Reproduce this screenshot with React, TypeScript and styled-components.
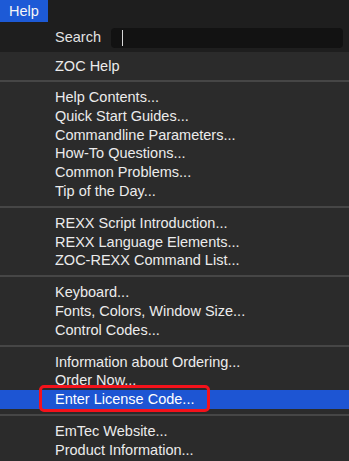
import React from 'react';
import styled, { createGlobalStyle } from 'styled-components';

const GlobalStyle = createGlobalStyle`
  html, body {
    margin: 0;
    padding: 0;
    background: #2b2b2b;
  }
  body {
    font-family: "Liberation Sans", Arial, sans-serif;
    -webkit-font-smoothing: antialiased;
  }
`;

const Page = styled.div`
  width: 349px;
  height: 461px;
  overflow: hidden;
  background: #2b2b2b;
  color: #ececec;
  font-size: 14.5px;
`;

const MenuBar = styled.div`
  display: flex;
  height: 22px;
  background: #1e1e1e;
`;

const MenuTitle = styled.div<{ active?: boolean }>`
  display: flex;
  align-items: center;
  padding: 0 9px;
  width: 48px;
  box-sizing: border-box;
  background: ${(p) => (p.active ? '#1d5ad6' : 'transparent')};
  color: #f6f6f6;
  font-size: 14.5px;
`;

const SearchRow = styled.div`
  display: flex;
  align-items: center;
  height: 30px;
  padding: 0 6px 0 55px;
  background: #1e1e1e;
`;

const SearchLabel = styled.span`
  width: 56px;
  color: #e2e2e2;
`;

const SearchField = styled.div`
  flex: 1;
  height: 20px;
  margin-top: 2px;
  border-radius: 4px;
  background: #121212;
  display: flex;
  align-items: center;
  padding-left: 11px;
`;

const Caret = styled.div`
  width: 1px;
  height: 16px;
  background: #d8d8d8;
`;

const TopItem = styled.div`
  height: 28px;
  display: flex;
  align-items: center;
  padding-left: 55px;
`;

const Separator = styled.div`
  height: 2px;
  background: #464646;
`;

const Group = styled.div`
  padding: 6px 0 5px;
`;

const Item = styled.div<{ selected?: boolean }>`
  position: relative;
  height: 18.8px;
  line-height: 18.8px;
  padding-left: 55px;
  white-space: nowrap;
  background: ${(p) => (p.selected ? '#1d55d3' : 'transparent')};
  color: ${(p) => (p.selected ? '#ffffff' : '#ececec')};
`;

const Marker = styled.div`
  position: absolute;
  left: 39px;
  top: -5px;
  width: 171px;
  height: 27px;
  box-sizing: border-box;
  border: 3px solid #f4121b;
  border-radius: 5px;
`;

const groups: { label: string; selected?: boolean }[][] = [
  [
    { label: 'Help Contents...' },
    { label: 'Quick Start Guides...' },
    { label: 'Commandline Parameters...' },
    { label: 'How-To Questions...' },
    { label: 'Common Problems...' },
    { label: 'Tip of the Day...' },
  ],
  [
    { label: 'REXX Script Introduction...' },
    { label: 'REXX Language Elements...' },
    { label: 'ZOC-REXX Command List...' },
  ],
  [
    { label: 'Keyboard...' },
    { label: 'Fonts, Colors, Window Size...' },
    { label: 'Control Codes...' },
  ],
  [
    { label: 'Information about Ordering...' },
    { label: 'Order Now...' },
    { label: 'Enter License Code...', selected: true },
  ],
  [{ label: 'EmTec Website...' }, { label: 'Product Information...' }],
];

const App: React.FC = () => {
  return (
    <Page>
      <GlobalStyle />
      <MenuBar>
        <MenuTitle active>Help</MenuTitle>
      </MenuBar>
      <SearchRow>
        <SearchLabel>Search</SearchLabel>
        <SearchField>
          <Caret />
        </SearchField>
      </SearchRow>
      <TopItem>ZOC Help</TopItem>
      {groups.map((group, gi) => (
        <React.Fragment key={gi}>
          <Separator />
          <Group>
            {group.map((it) => (
              <Item key={it.label} selected={it.selected}>
                {it.label}
                {it.selected && <Marker />}
              </Item>
            ))}
          </Group>
        </React.Fragment>
      ))}
    </Page>
  );
};

export default App;
